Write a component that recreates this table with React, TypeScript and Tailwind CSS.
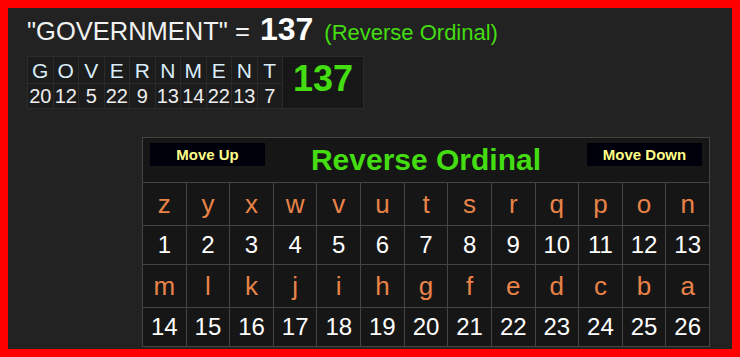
const word = [
  ['G', 20],
  ['O', 12],
  ['V', 5],
  ['E', 22],
  ['R', 9],
  ['N', 13],
  ['M', 14],
  ['E', 22],
  ['N', 13],
  ['T', 7],
] as const

const letters = 'zyxwvutsrqponmlkjihgfedcba'.split('')

const rows = [letters.slice(0, 13), letters.slice(13)]

export default function App() {
  return (
    <div className="w-[740px] h-[357px] border-[8px] border-[#ff0000] bg-[#222222] font-['Liberation_Sans',Arial,sans-serif] overflow-hidden">
      <div className="pl-[19px] pt-[5px]">
        <div className="flex items-baseline leading-none whitespace-nowrap">
          <span className="text-[25.5px] text-[#f2f2f2]">"GOVERNMENT" =&nbsp;</span>
          <span className="text-[32px] font-bold text-white ml-[3px]">137</span>
          <span className="text-[22px] text-[#44dd11] ml-[11px]">(Reverse Ordinal)</span>
        </div>

        <div className="mt-[11px] w-[337px] grid grid-cols-[repeat(10,minmax(0,1fr))_80px] grid-rows-[26px_24px] gap-px bg-[#2b2b2b] p-px">
          {word.map(([l], i) => (
            <div key={'l' + i} className="bg-[#1c1c1c] flex items-center justify-center text-[21px] leading-none text-[#d9edfa]">
              {l}
            </div>
          ))}
          <div className="row-span-2 col-start-11 row-start-1 bg-[#171717] flex items-center justify-center pb-[7px] text-[36px] font-bold leading-none text-[#44dd11]">
            137
          </div>
          {word.map(([, n], i) => (
            <div key={'n' + i} className="bg-[#1c1c1c] flex items-center justify-center text-[20px] leading-none text-[#eeeeee]">
              {n}
            </div>
          ))}
        </div>
      </div>

      <div className="ml-[134px] mt-[28px] w-[568px] grid grid-cols-[repeat(13,minmax(0,1fr))] grid-rows-[44px_42px_38px_42px_38px] gap-px bg-[#444444] p-px">
        <div className="col-span-full bg-[#161616] flex justify-between items-start px-[7px] pt-[5px]">
          <button className="w-[115px] h-[23px] bg-[#00000a] text-[15px] font-bold leading-none text-[#ffff88]">
            Move Up
          </button>
          <div className="mt-[2px] text-[30px] font-bold leading-none text-[#44dd11]">Reverse Ordinal</div>
          <button className="w-[115px] h-[23px] bg-[#00000a] text-[15px] font-bold leading-none text-[#ffff88]">
            Move Down
          </button>
        </div>
        {rows.map((row, r) => (
          <>
            {row.map((l) => (
              <div key={l} className="bg-[#161616] flex items-center justify-center text-[26px] leading-none text-[#e98348]">
                {l}
              </div>
            ))}
            {row.map((_, i) => (
              <div key={'n' + r + i} className="bg-[#161616] flex items-center justify-center text-[24px] leading-none text-white">
                {r * 13 + i + 1}
              </div>
            ))}
          </>
        ))}
      </div>
    </div>
  )
}
